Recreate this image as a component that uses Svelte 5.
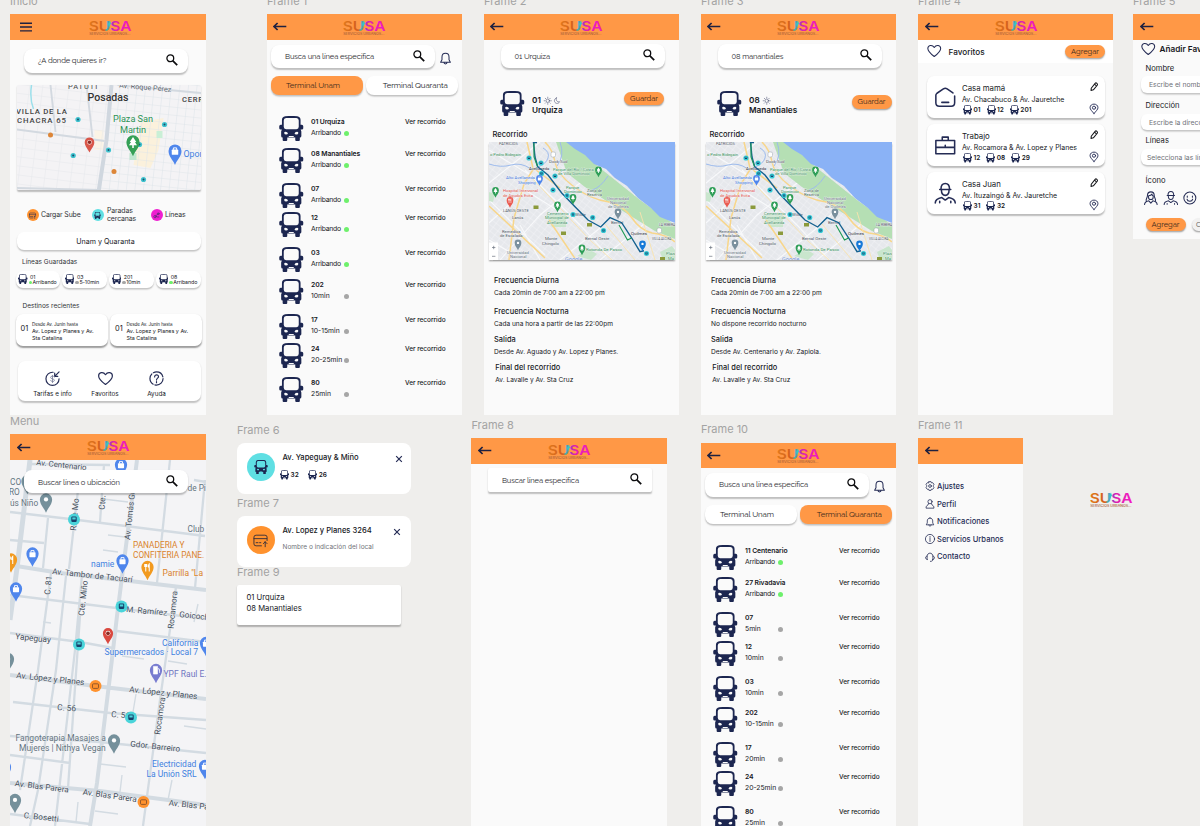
<script>
  const unam = [
    ['01 Urquiza', 'Arribando', true, 32],
    ['08 Manantiales', 'Arribando', true, 35],
    ['07', 'Arribando', true, 29],
    ['12', 'Arribando', true, 35],
    ['03', 'Arribando', true, 32],
    ['202', '10min', false, 35],
    ['17', '10-15min', false, 28.5],
    ['24', '20-25min', false, 34.5],
    ['80', '25min', false, 30]
  ];
  const quaranta = [
    ['11 Centenario', 'Arribando', true, 32],
    ['27 Rivadavia', 'Arribando', true, 35],
    ['07', '5min', false, 29],
    ['12', '10min', false, 35],
    ['03', '10min', false, 31.5],
    ['202', '10-15min', false, 35],
    ['17', '20min', false, 28.5],
    ['24', '20-25min', false, 35],
    ['80', '25min', false, 30]
  ];
  const chips = [
    ['01', 'Arribando', true],
    ['03', '5-10min', false],
    ['201', '10min', false],
    ['08', 'Arribando', true]
  ];
  const favs = [
    { icon: 'home', name: 'Casa mamá', addr: 'Av. Chacabuco & Av. Jauretche', lines: ['01', '12', '201'] },
    { icon: 'case', name: 'Trabajo', addr: 'Av. Rocamora & Av. Lopez y Planes', lines: ['12', '08', '29'] },
    { icon: 'man', name: 'Casa Juan', addr: 'Av. Ituzaingó & Av. Jauretche', lines: ['31', '32'] }
  ];
  const fields = [
    ['Nombre', 'Escribe el nombre'],
    ['Dirección', 'Escribe la dirección'],
    ['Líneas', 'Selecciona las líneas']
  ];
  const menu = [
    ['gear', 'Ajustes', 19],
    ['user', 'Perfil', 17.5],
    ['bell', 'Notificaciones', 17.5],
    ['info', 'Servicios Urbanos', 17.5],
    ['phones', 'Contacto', 17.5]
  ];
  const routes = [
    {
      cls: 'f2', label: 'Frame 2', query: '01 Urquiza', num: '01', name: 'Urquiza', night: true,
      info: [
        ['Frecuencia Diurna', 'Cada 20min de 7:00 am a 22:00 pm'],
        ['Frecuencia Nocturna', 'Cada una hora a partir de las 22:00pm'],
        ['Salida', 'Desde Av. Aguado y Av. Lopez y Planes.'],
        ['Final del recorrido', 'Av. Lavalle y Av. Sta Cruz']
      ]
    },
    {
      cls: 'f3', label: 'Frame 3', query: '08 manantiales', num: '08', name: 'Manantiales', night: false,
      info: [
        ['Frecuencia Diurna', 'Cada 20min de 7:00 am a 22:00 pm'],
        ['Frecuencia Nocturna', 'No dispone recorrido nocturno'],
        ['Salida', 'Desde Av. Centenario y Av. Zapiola.'],
        ['Final del recorrido', 'Av. Lavalle y Av. Sta Cruz']
      ]
    }
  ];

  // text, x, y, size, rotation, colour
  const G = '#434e5b', B = '#3f7fe0', O = '#d9822b', S = '#64747f';
  const streets = [
    ['Av. Centenario', 36, 465, 7.9, 6, G],
    ['CO', 10, 485, 8.3, 0, S],
    ['RO', 9, 495, 8.3, 0, S],
    ['ús Niño', 10, 505.5, 8.3, 0, S],
    ['R. de Mo', 76, 531, 8.3, -85, G],
    ['Cte.', 104.5, 510, 8.3, -86, G],
    ['Av. Tomás Gue', 130, 540, 8.3, -84, G],
    ['de Pi', 187.5, 491, 8.3, 0, S],
    ['Club', 187.5, 532, 8.3, 0, S],
    ['PANADERIA Y', 133, 548, 8.3, 0, O],
    ['CONFITERIA PANE.', 133, 558, 8.3, 0, O],
    ['namie', 91, 566.5, 8.5, 0, B],
    ['Parrilla "La', 162.5, 576, 8.5, 0, O],
    ['Av. Tambor de Tacuarí', 52, 574, 8.2, 6, G],
    ['C. 81', 50, 595, 8.3, -84, G],
    ['Cte. Miño', 84, 616, 8.3, -84, G],
    ['M. Ramírez', 126, 612, 8.2, 5, G],
    ['Goicoche', 179, 617, 8.2, 6, G],
    ['Rocamora', 173.5, 629, 8.3, -84, G],
    ['Yapeguay', 15, 639, 8.3, 6, G],
    ['California', 162, 645.5, 8.5, 0, B],
    ['Supermercados · Local 7', 104.5, 654.5, 8.5, 0, B],
    ['YPF Raul E.', 163.5, 677, 8.5, 0, '#6f74c0'],
    ['Av. López y Planes', 16, 678, 8.3, 6, G],
    ['Av. López y Planes', 129, 692, 8.3, 6, G],
    ['C. 56', 57, 710, 8.3, 4, G],
    ['C. 56', 111, 717, 8.3, 4, G],
    ['Rocamora', 160, 735, 8.3, -82, G],
    ['Fangoterapia Masajes a', 15.5, 741, 8.5, 0, S],
    ['Mujeres | Nithya Vegan', 19, 751, 8.5, 0, S],
    ['Gdor. Barreiro', 130, 746.5, 8.2, 6, G],
    ['Electricidad', 152, 767, 8.5, 0, B],
    ['La Unión SRL', 146.5, 777, 8.5, 0, B],
    ['Av. Blas Parera', 14.5, 786, 8.2, 7, G],
    ['Av. Blas Parera', 82.5, 794.5, 8.2, 8, G],
    ['Av. Blas Pa', 168.5, 805.5, 8.2, 6, G],
    ['C. Bosetti', 23.5, 818, 8.2, 6, G]
  ];
  const E = '#2f8f56', K = '#4b5563';
  const places = [
    ['PATRICIOS', 499, 145, 3.9, K],
    ['o Pedro Bidegain', 490, 156, 4.1, E],
    ['Dock Sud', 549, 162.5, 4.4, K],
    ['Avellaneda', 529, 170, 4.2, '#1f2937'],
    ['Parque del Río / Costa', 553, 170.7, 4.1, E],
    ['de Villa Domínico', 558, 174.9, 4.1, E],
    ['Alto Avellaneda', 506, 179.4, 4.2, '#3b76dc'],
    ['Shopping', 518, 184, 4.2, '#3b76dc'],
    ['Hospital Interzonal', 503, 192.3, 4.2, '#e0524a'],
    ['de Agudos Evita', 503, 196.5, 4.2, '#e0524a'],
    ['Parque', 566, 188.5, 4.2, E],
    ['Dominico', 564, 193, 4.2, E],
    ['Zona de', 587, 191.5, 4.2, '#3f6b54'],
    ['Reserva', 587, 196, 4.2, '#3f6b54'],
    ['Universidad', 607, 199.5, 4.2, S],
    ['Nacional', 610, 203.7, 4.2, S],
    ['de Quilmes', 608, 208, 4.2, S],
    ['LANÚS OESTE', 503, 211.5, 4, K],
    ['Lanús', 512, 219.2, 4.2, K],
    ['Cementerio', 547, 215, 4.2, E],
    ['Municipal de', 545, 219.3, 4.2, E],
    ['Avellaneda', 547, 223.7, 4.2, E],
    ['Wilde', 575, 216, 4.4, K],
    ['Bernal', 611, 223.5, 4.4, K],
    ['Remedios', 502, 232.8, 4.2, K],
    ['de Escalada', 500, 237, 4.2, K],
    ['Monte', 545, 240, 4.3, K],
    ['Chingolo', 542, 244.5, 4.3, K],
    ['Bernal Oeste', 585, 239.5, 4.3, K],
    ['Quilmes', 631, 234.5, 4.4, '#1f2937'],
    ['LA RIBERA', 659, 226, 3.4, K],
    ['VILLA ALCIRA', 652, 240, 3.1, K],
    ['Rotonda De Pasco', 586, 251, 4.4, E],
    ['Universidad', 507, 254, 4.2, S],
    ['Nacional', 510, 258.3, 4.2, S],
    ['Google', 565, 260.5, 5.5, '#6b8fd8'],
    ['Plaza', 666, 255, 4.2, E],
    ['Ma', 668, 259.5, 4.2, E]
  ];
  const stops = [[529, 158], [541, 163], [541.5, 173.5], [555, 176], [553, 190], [567, 195.5], [573, 214.5], [592.7, 217.5], [603.5, 230.5], [646.5, 253.5]];
</script>

{#snippet bus(cls)}
  <svg class="bus {cls}" viewBox="0 0 24 25">
    <path fill-rule="evenodd" d="M6 .2Q12-.3 18 .2 21.300.8 21.300 4v4.800h1.200Q24 9 24 10.200v2q0 1.300-1.500 1.400H21.400l.7 2V20q0 1.500-1.500 1.500V24q0 1-1 1h-2.600q-1 0-1-1v-2.500H8V24q0 1-1 1H4.400q-1 0-1-1v-2.500Q1.900 21.500 1.900 20v-4.400l.7-2H1.500Q0 13.500 0 12.200v-2Q0 9 1.500 8.800H2.700V4Q2.700.8 6 .2ZM6.800 2Q4.500 2.200 4.500 4.500v6.300Q4.500 13.200 6.800 13.200h10.400q2.300 0 2.300-2.400V4.500q0-2.300-2.300-2.500ZM6.300 15.800q-1.600 0-1.300 1.400.2 1.200 1.800 1.200t1.900-1q-.4-1.600-2.400-1.600Zm11.400 0q-2 0-2.400 1.600.2 1 1.900 1t1.800-1.200q.3-1.400-1.300-1.400ZM9.500 19.900v1h5v-1Z" />
  </svg>
{/snippet}

{#snippet logo()}
  <svg class="logo" viewBox="0 0 43 17">
    <defs>
      <linearGradient id="lg" gradientUnits="userSpaceOnUse" x1="0" y1="0" x2="42" y2="0">
        <stop offset="0" stop-color="#e07a1c" /><stop offset=".3" stop-color="#d4601e" /><stop offset=".37" stop-color="#d8642a" />
        <stop offset=".42" stop-color="#46b5b0" /><stop offset=".48" stop-color="#5a8fd0" />
        <stop offset=".54" stop-color="#a535c0" /><stop offset=".64" stop-color="#e31fae" /><stop offset="1" stop-color="#f01bc4" />
      </linearGradient>
    </defs>
    <text class="word" x="-.2" y="11.300" textLength="42.600" lengthAdjust="spacingAndGlyphs" fill="url(#lg)">SUSA</text>
    <path d="M19 4 21 .6 21.800 3.200 20.200 7.500Z" fill="#35c6c6" />
    <text class="tag" x=".3" y="15.200" textLength="41" lengthAdjust="spacingAndGlyphs" fill="#a9603a">SERVICIOS URBANOS...</text>
  </svg>
{/snippet}

{#snippet arrow()}
  <svg class="arrow" viewBox="0 0 14 9"><path d="M13.300 4.500H1M4.600 1 1 4.500 4.600 8" /></svg>
{/snippet}

{#snippet header(home = false)}
  <header>
    {#if home}
      <svg class="burger" viewBox="0 0 12 10"><path d="M0 1.200h12M0 5h12M0 8.900h12" /></svg>
    {:else}
      {@render arrow()}
    {/if}
    {@render logo()}
  </header>
{/snippet}

{#snippet search(text, cls = '')}
  <div class="search {cls}">
    <span>{text}</span>
    <svg viewBox="0 0 12 12"><circle cx="4.300" cy="4.300" r="3.400" /><path d="m6.900 6.900 4.300 4.300" /></svg>
  </div>
{/snippet}

{#snippet icon(name, cls = '')}
  <svg class="ico {cls}" viewBox="0 0 24 24">
    {#if name === 'heart'}
      <path d="M12 21.500C6 17 1 12.500 1 7.800 1 2 8.500.5 12 6c3.500-5.500 11-4 11 1.800 0 4.700-5 9.200-11 13.700Z" />
    {:else if name === 'bell'}
      <path d="M12 2.500c-4.500 0-6.500 3.300-6.500 7v4.800L3 18.800h18l-2.500-4.500V9.500c0-3.700-2-7-6.500-7ZM9 19c.3 4 5.700 4 6 0" />
    {:else if name === 'home'}
      <path d="M23 10.500v8q0 4-4 4H5q-4 0-4-4V9.800q0-1.500 1.300-2.500l7.500-5Q12 .800 14.200 2.300l6.800 4.700M8 18h8" />
    {:else if name === 'case'}
      <path d="M1 6.500h22V22H1ZM1 14.500h22M8.500 6V2.500h7V6M12 12v1.500" />
    {:else if name === 'man' || name === 'kid'}
      <path d="M5.500 7.500h13M7 7C7 2.500 9 .5 12 .5S17 2.500 17 7M7.500 8c0 4 2 6.500 4.500 6.500s4.500-2.500 4.500-6.500M.3 23.500c0-4 3-5.500 7.700-6.500l4 3 4-3c4.700 1 7.700 2.500 7.700 6.500M5.500 23v-1.500M18.500 23v-1.500" />
    {:else if name === 'woman'}
      <path d="M4 17.500C2.500 14 6 12 6 8c0-9 12-9 12 0 0 4 3.500 6 2 9.500M8 8c3 0 5-1 6-3 0 2 1 3 2 3v3c0 5-8 5-8 0ZM1 23.500c0-4 3-5.500 7.500-6.500l3.500 4 3.500-4c4.500 1 7.500 2.500 7.500 6.500" />
    {:else if name === 'face'}
      <circle cx="12" cy="12" r="10.500" /><path d="M7 14c1 5 9 5 10 0M7.500 8.500v2M16.500 8.500v2" />
    {:else if name === 'gear'}
      <circle cx="12" cy="12" r="3.300" /><path d="M9.500 1.500h5l1 3 3-.5 3 4-1.500 3v2l1.500 3-3 4-3-.5-1 3h-5l-1-3-3 .5-3-4L4 13v-2L2.500 8l3-4 3 .5Z" />
    {:else if name === 'user'}
      <circle cx="12" cy="6.500" r="5" /><path d="M8.500 11 7 14.500C4 15.500 2.500 17.500 2.500 22h19c0-4.500-1.500-6.500-4.500-7.500L15.500 11" />
    {:else if name === 'info'}
      <circle cx="12" cy="12" r="11" /><path d="M12 10.500V18M12 6v2" />
    {:else if name === 'phones'}
      <path d="M5 18c-5-1-5-8 0-8v8ZM19 18c5-1 5-8 0-8v8ZM5 10C5 0 19 0 19 10M19 18c0 3-2 4.500-6 4.500" />
    {:else if name === 'fare'}
      <path d="M13 2C7 1.500 1.500 6 1.500 12.500S6.500 23 12 23s10.500-4 10.500-10.500M22.500 1.500 15.500 8.500M15.500 3.500v5h5" /><path class="thin" d="M15 9.500c-1-2-6-2-6 .8 0 3 6 1.500 6 4.500 0 2.800-5 2.800-6 .5M12 7v11.500" />
    {:else if name === 'help'}
      <circle cx="12" cy="12" r="10.500" stroke-dasharray="19 3" /><path d="M9 9.500c0-4.500 6.500-4 6.200-.3C15 11.500 12 11.500 12 14.500M12 17v1.800" />
    {:else if name === 'pencil'}
      <path d="m3.500 17 11-14q2-2.500 5 0t1 5.500L9.500 21.500 3 23.500ZM13 5.500l5 4.500" />
    {:else if name === 'pin'}
      <path d="M12 23.500C7 17.500 2.500 13.500 2.500 9.500 2.500-2 21.500-2 21.500 9.500 21.500 13.500 17 17.500 12 23.500Z" /><circle cx="12" cy="9.500" r="3.800" />
    {:else if name === 'card'}
      <path d="M13.500 20.500H5q-3.500 0-3.500-3V6.500q0-3 3.500-3h14q3.500 0 3.500 3V12M1.500 9H22M5 15.500h3M10.500 15.500h2M19.500 22v-8M16.500 17l3-3 3 3" />
    {:else if name === 'sun'}
      <circle cx="12" cy="12" r="5.500" /><path d="M12 .5v2.500M12 21v2.500M.5 12H3M21 12h2.500M4 4l1.500 1.500M18.500 18.500 20 20M20 4l-1.500 1.500M5.500 18.500 4 20" />
    {:else if name === 'moon'}
      <path d="M11 3C2 5 2 19 12 20.500c4 .5 8-2 9-5.500-8 2-13-5-10-12Z" />
    {:else if name === 'close'}
      <path d="m3.500 3.500 17 17M20.500 3.500l-17 17" />
    {:else if name === 'route'}
      <circle cx="7" cy="16" r="4" /><circle cx="18" cy="6" r="3" /><path d="M10 13 15 8M15 17h5" />
    {/if}
  </svg>
{/snippet}

{#snippet pin(x, y, s, c, kind = 'dot')}
  <g transform="translate({x} {y}) scale({s})">
    <path d="M0 12C-2 7-6 4-6-1a6 6 0 0 1 12 0C6 4 2 7 0 12Z" fill={c} />
    {#if kind === 'bag'}
      <rect x="-3" y="-2.200" width="6" height="4.800" rx=".6" fill="#fff" /><path d="M-1.500-2v-1.800h3V-2" fill="none" stroke="#fff" stroke-width=".9" />
    {:else if kind === 'fuel'}
      <path d="M-2.500-4.500h4v7.500h-4ZM2.200-3 3.500-1.500v3.500" fill="#fff" stroke="#fff" stroke-width=".6" />
    {:else if kind === 'tree'}
      <path d="M0-5.500 3-1H1.800L3.600 2H.7v2.500H-.7V2h-2.900L-1.800-1H-3Z" fill="#fff" />
    {:else if kind === 'food'}
      <path d="M-1.700-4v7.500M1.700 3.500V-4q-1.500 1.500-.8 3.500M-2.700-4v2.500h2V-4" fill="none" stroke="#fff" stroke-width="1" />
    {:else if kind === 'dark'}
      <circle r="2.900" cy="-.8" fill="#fbe9e7" /><circle r="2.200" cy="-.8" fill="#8b2b22" />
    {:else}
      <circle r="2.100" cy="-1" fill="#fff" />
    {/if}
  </g>
{/snippet}

{#snippet stop(x, y, r, c)}
  <circle cx={x} cy={y} {r} fill={c} />
  {#if c === '#ff922e'}
    <rect x={x - 3} y={y - 2.2} width="6" height="4.600" rx="1" fill="none" stroke="#7a4a2a" stroke-width=".8" />
  {:else}
    <rect x={x - r * 0.45} y={y - r * 0.5} width={r * 0.9} height={r * 0.9} rx={r * 0.2} fill="#17406b" />
    <rect x={x - r * 0.28} y={y - r * 0.35} width={r * 0.56} height={r * 0.35} fill={c} />
  {/if}
{/snippet}

{#snippet routeMap()}
  <svg class="routemap" viewBox="489 142 186 118">
    <defs>
      <pattern id="blk" width="6" height="5" patternUnits="userSpaceOnUse" patternTransform="rotate(38)">
        <path d="M0 0H6M0 0V5" stroke="#f5f6f8" stroke-width=".7" />
      </pattern>
    </defs>
    <rect x="489" y="142" width="186" height="118" fill="#e6e8ec" />
    <rect x="489" y="142" width="186" height="118" fill="url(#blk)" />
    <path d="M489 183 540 142M489 223 525 190 565 215M500 260 540 215 590 175M560 260 600 228 640 190M489 200 545 255M525 170 580 225 612 260M489 150 530 175M600 260 655 215M540 260 520 225M489 240 515 255" stroke="#f8f9fb" stroke-width="1.100" fill="none" />
    <path d="M556 142 571 142 600 168 640 200 675 225V239L655 231 634 218 605 200 585 187 567 173Z" fill="#b5dfb4" />
    <path d="M566 142 575 149 585 155 594 164 606 169 615 178 627 186 638 198 651 208 660 217 675 223V142Z" fill="#8ab2f6" />
    <path d="M489 164q12 4 22 1t20 4M538 167q8-3 10-9t-5-10M560 142q5 14-3 24M592 190q8-2 16-14" stroke="#9dbbed" stroke-width="1" fill="none" />
    <path d="M546 215h20v12h-14ZM577 256l12-7 8 5-6 6ZM660 252l12-6 3 4v10h-12ZM489 192l6 2-2 8-4-1Z" fill="#c9e6cd" />
    <path d="M545 142q8 8 10 20t18 24q16 13 36 16 15 4 23 16t20 15q16 2 23 9M527 142 533 168M534 168 524 184 514 218 509 260M489 206 545 258M549 220 576 260M536 170 560 188" stroke="#f8d68a" stroke-width="1.500" fill="none" />
    <path d="M532 178 590 240 612 260M605 224 635 260M640 212 655 260" stroke="#f9e3ae" stroke-width=".9" fill="none" />
    <g fill="#8b9a3c"><rect x="533.500" y="205.500" width="5" height="3.500" /><rect x="587" y="223" width="5" height="3.500" /><rect x="561" y="231.500" width="5" height="3.500" /><rect x="660" y="257" width="5" height="3" /></g>
    <g fill="#fff" stroke="#9aa3ad" stroke-width=".5"><rect x="551" y="152" width="4.500" height="5" rx="1.500" /><rect x="657" y="228" width="4.500" height="5" rx="1.500" /></g>
    {#each places as [t, x, y, s, c]}
      <text class="maptext" {x} {y} font-size={s} fill={c}>{t}</text>
    {/each}
    <path d="M537 142.500h-3.500l1.500 14.500 2.700 9.700L548 175l13.700 18 13.300 13.700L588 220l12.700 7 9.300-9.300 11.700 5L631.700 238l8.300 13.700 4-1" stroke="#15618f" stroke-width="1.400" fill="none" />
    <path d="M534 143v14l3.500 9.500M619 225l8.500 15 4-2" stroke="#1d9a55" stroke-width="1.100" fill="none" />
    {#each stops as [x, y]}{@render stop(x, y, 2.6, '#35cbd6')}{/each}
    {@render pin(598.5, 170.5, 0.56, '#2e9e57', 'tree')}
    {@render pin(495.5, 191, 0.56, '#2e9e57', 'tree')}
    {@render pin(573, 198, 0.56, '#2e9e57', 'tree')}
    {@render pin(557.5, 205.5, 0.56, '#2e9e57', 'tree')}
    {@render pin(582, 248.5, 0.56, '#2e9e57', 'tree')}
    {@render pin(539.5, 179, 0.56, '#4f86ec', 'bag')}
    {@render pin(510, 201, 0.56, '#ea5a50', 'food')}
    {@render pin(618, 212.5, 0.56, '#7a909e')}
    {@render pin(518, 243.5, 0.56, '#7a909e')}
    {@render pin(642.5, 244.5, 0.56, '#1679d8')}
    <rect x="489" y="242.500" width="9" height="17.500" fill="#fff" />
    <path d="M492 247.500h3.400M493.700 245.800v3.400M492 256.300h3.400" stroke="#6b7280" stroke-width=".7" />
  </svg>
{/snippet}

{#snippet lineList(label, cls, active, rows)}
  <section class="frame {cls}">
    <p class="label">{label}</p>
    <div class="screen">
      {@render header()}
      <div class="searchrow">{@render search('Busca una línea específica')}{@render icon('bell', 'belltop')}</div>
      <div class="tabs">
        <div class="tab" class:on={active === 0}>Terminal Unam</div>
        <div class="tab second" class:on={active === 1}>Terminal Quaranta</div>
      </div>
      <div class="list">
        {#each rows as [name, status, live, h]}
          <div class="row" style="height: {h}px">
            {@render bus('big')}
            <div class="who"><b>{name}</b><div class="status"><span class:live>{status}</span><i class:live></i></div></div>
            <span class="see">Ver recorrido</span>
          </div>
        {/each}
      </div>
    </div>
  </section>
{/snippet}

<main>
  <section class="frame inicio">
    <p class="label">Inicio</p>
    <div class="screen">
      {@render header(true)}
      {@render search('¿A donde quieres ir?', 'inset')}
      <svg class="citymap" viewBox="16.500 85 184.500 105">
        <defs>
          <pattern id="gr" width="8.500" height="8" patternUnits="userSpaceOnUse" patternTransform="rotate(6)"><path d="M0 0H8.500M0 0V8" stroke="#dfe5ea" stroke-width="1.100" /></pattern>
          <pattern id="gl" width="13" height="9" patternUnits="userSpaceOnUse" patternTransform="rotate(7)"><path d="M0 0H13M0 0V9" stroke="#e5e8ec" stroke-width="1" /></pattern>
        </defs>
        <rect x="16" y="85" width="186" height="105" fill="#f4f3f5" />
        <path d="M140 122 163 118 158 150 150 168 133 165Z" fill="#fbf1dc" /><path d="M94 130h9v20h-9Z" fill="#fbf4e6" />
        <path d="M16 85h94l-10 105H16Z" fill="url(#gl)" /><path d="M110 85h92v105H100Z" fill="url(#gr)" />
        <path d="M16 129.500 104 141M117 85 201 93M16 188 100 190M50 85 55 132M86 85 92 137" stroke="#d3d9e0" stroke-width="1.900" fill="none" />
        <path d="M111 85 106 140 98 192" stroke="#d0d7df" stroke-width="4" fill="none" />
        <path d="M31 85q-2 14 2 24" stroke="#9bdfea" stroke-width="1.500" fill="none" />
        <rect x="156" y="131" width="6" height="7" fill="#c9efd6" /><rect x="129" y="153" width="7" height="7" fill="#bfe8d0" />
        <text class="maptext" x="67.500" y="89" font-size="7.400" fill="#444" letter-spacing="1">PATUTI</text>
        <text class="maptext" transform="translate(118.500 87.500) rotate(5)" font-size="7.300" fill="#59626c">Av. Roque Pérez</text>
        <text class="maptext md" x="87" y="100.500" font-size="10.600" fill="#333" textLength="41">Posadas</text>
        <text class="maptext md" x="181.500" y="101.500" font-size="7.600" fill="#444" letter-spacing=".7">CERRO</text>
        <text class="maptext md" x="15.500" y="113.800" font-size="7.800" fill="#444" textLength="51">VILLA DE LA</text>
        <text class="maptext md" x="16.500" y="122.800" font-size="7.800" fill="#444" textLength="49">CHACRA 65</text>
        <text class="maptext" x="112.500" y="122" font-size="9.200" fill="#2c9254" textLength="40">Plaza San</text>
        <text class="maptext" x="119.500" y="132.500" font-size="9.200" fill="#2c9254" textLength="26">Martin</text>
        <text class="maptext" x="183" y="157" font-size="8.800" fill={B}>Oportunidad</text>
        {#each [[77.5, 119.5], [164, 124.5], [108, 150], [72.7, 155.5], [139, 144.5], [143, 179.5]] as [x, y]}
          <circle cx={x} cy={y} r="2.600" fill="#3fc3cf" /><circle cx={x} cy={y} r="1" fill="#1c4c6b" />
        {/each}
        {#each [[50, 135], [113.5, 171.5]] as [x, y]}<circle cx={x} cy={y} r="2.500" fill="#dd8638" />{/each}
        {@render pin(132.5, 143, 1.1, '#35a056', 'tree')}
        {@render pin(89, 143, 0.8, '#d9574a', 'dark')}
        {@render pin(174.5, 152, 1.08, '#4f86ec', 'bag')}
      </svg>
      <div class="legend">
        <span class="badge or">{@render icon('card')}</span><span class="l1">Cargar Sube</span>
        <span class="badge te">{@render bus('mini')}</span><span class="l2">Paradas<br />cercanas</span>
        <span class="badge ma">{@render icon('route')}</span><span>Líneas</span>
      </div>
      <div class="wide">Unam y Quaranta</div>
      <p class="cap">Líneas Guardadas</p>
      <div class="chips">
        {#each chips as [n, s, live]}
          <div class="chip">{@render bus('tiny')}<div><span>{n}</span><span class="st"><i class:live></i>{s}</span></div></div>
        {/each}
      </div>
      <p class="cap dest">Destinos recientes</p>
      <div class="recents">
        {#each [0, 1] as _}
          <div class="recent"><em>01</em><div><small>Desde Av. Junín hasta</small><span>Av. Lopez y Planes y Av.<br />Sta Catalina</span></div></div>
        {/each}
      </div>
      <nav>
        <div class="n1">{@render icon('fare')}<span>Tarifas e info</span></div>
        <div class="n2">{@render icon('heart')}<span>Favoritos</span></div>
        <div class="n3">{@render icon('help')}<span>Ayuda</span></div>
      </nav>
    </div>
  </section>

  {@render lineList('Frame 1', 'f1', 0, unam)}

  {#each routes as r}
    <section class="frame {r.cls}">
      <p class="label">{r.label}</p>
      <div class="screen">
        {@render header()}
        {@render search(r.query, 'mid')}
        <div class="line">
          {@render bus('big')}
          <div class="title"><div>{r.num}<span class="sky">{@render icon('sun')}{#if r.night}{@render icon('moon')}{/if}</span></div><div>{r.name}</div></div>
          <div class="btn">Guardar</div>
        </div>
        <p class="rec">Recorrido</p>
        {@render routeMap()}
        <dl>
          {#each r.info as [t, d]}<div><dt>{t}</dt><dd>{d}</dd></div>{/each}
        </dl>
      </div>
    </section>
  {/each}

  <section class="frame f4">
    <p class="label">Frame 4</p>
    <div class="screen">
      {@render header()}
      <div class="favhead">{@render icon('heart')}<b>Favoritos</b><div class="btn">Agregar</div></div>
      <div class="cards">
        {#each favs as f}
          <div class="card">
            {@render icon(f.icon, 'lead')}
            <div class="info">
              <strong>{f.name}</strong><span>{f.addr}</span>
              <div class="lines">{#each f.lines as l}<span>{@render bus('sm')}{l}</span>{/each}</div>
            </div>
            <div class="acts">{@render icon('pencil', 'pencil')}{@render icon('pin', 'loc')}</div>
          </div>
        {/each}
      </div>
    </div>
  </section>

  <section class="frame f5">
    <p class="label">Frame 5</p>
    <div class="screen">
      {@render header()}
      <div class="addhead">{@render icon('heart')}<b>Añadir Favorito</b></div>
      {#each fields as [l, p], i}
        <p class="flabel" class:tight={i === 2}>{l}</p>
        <div class="input">{p}</div>
      {/each}
      <p class="flabel il">Ícono</p>
      <div class="faces">{@render icon('woman')}{@render icon('kid')}{@render icon('face')}</div>
      <div class="btns"><div class="btn">Agregar</div><div class="btn ghost">Cancelar</div></div>
    </div>
  </section>

  <section class="frame menu">
    <p class="label">Menu</p>
    <div class="screen">
      {@render header()}
      <svg class="streets" viewBox="10 460 195.500 366">
        <rect x="10" y="460" width="196" height="366" fill="#f4f4f6" />
        <g fill="none" stroke="#d3dbe2">
          <path stroke-width="5" d="M30 460 17 568 10 620" />
          <path stroke-width="4" d="M10 565 60 573 130 581 206 590M10 675 95 686 206 699M10 783 100 791 206 805M137 460 122 577 117 616 110 676 97 783 90 826" />
          <path stroke-width="2.300" d="M10 512 70 519 205 536M29 464 110 465M170 460 157 583M176 587 160 700 143 826M194 480 206 482M205 480 195 588M104 465 100 522M78 490 69 569M10 595 206 619M10 633 80 642 113 648M117 631 206 642M13 702 110 713 206 720M10 736 100 742 206 753M48 518 43 568M51 573 38 670 20 790M82 575 75 650 55 826M66 576 56 670 38 790 30 826M10 755 70 763M10 814 90 824M10 540 44 543M80 616 68 788" />
          <path stroke-width="1.400" d="M103 499 128 502M108 535 125 537M103 550 118 552M122 656 144 659M168 661 187 664M184 726 206 729M100 764 126 767M78 802 76 822M122 775 120 792M172 780 168 800M136 694 133 712M95 811 118 814M198 604 194 622M43 622 51 623" />
        </g>
        {#each streets as [t, x, y, s, r, c]}
          <text class="maptext" transform="translate({x} {y}) rotate({r})" font-size={s} fill={c}>{t}</text>
        {/each}
        {@render pin(121, 465.5, 1.02, '#4f86ec', 'bag')}
        {@render pin(32.5, 554.5, 1.02, '#4f86ec', 'bag')}
        {@render pin(16, 589.5, 1.02, '#4f86ec', 'bag')}
        {@render pin(122.5, 561.5, 1.02, '#4f86ec', 'bag')}
        {@render pin(147.5, 568, 1.02, '#f29a1f', 'food')}
        {@render pin(11, 560.5, 1.02, '#f29a1f', 'food')}
        {@render pin(46, 500.5, 1.02, '#75909b')}
        {@render pin(27.5, 482, 1.02, '#75909b')}
        {@render pin(108, 634, 0.85, '#d9483f', 'dark')}
        {@render pin(156, 671, 1.02, '#777bd0', 'fuel')}
        {@render pin(206, 644, 1.02, '#4f86ec', 'bag')}
        {@render pin(205, 767, 1.02, '#4f86ec', 'bag')}
        {@render pin(114, 741.5, 1.02, '#75909b')}
        {@render pin(15, 801, 1.02, '#75909b')}
        {@render pin(8, 660, 1.02, '#75909b')}
        {@render pin(5, 768, 1.02, '#4f86ec')}
        {@render stop(74, 519.5, 6, '#4ad4da')}
        {@render stop(121.5, 606.5, 6, '#4ad4da')}
        {@render stop(79, 644.5, 6, '#4ad4da')}
        {@render stop(131, 717.5, 6, '#4ad4da')}
        {@render stop(95.5, 686, 6, '#ff922e')}
        {@render stop(143.5, 802, 6, '#ff922e')}
      </svg>
      {@render search('Buscar línea o ubicación', 'over')}
    </div>
  </section>

  <section class="frame f6">
    <p class="label">Frame 6</p>
    <div class="pop">
      <span class="disc te">{@render bus('disk')}</span>
      <div class="info"><strong>Av. Yapeguay &amp; Miño</strong><div class="lines"><span>{@render bus('sm')}32</span><span>{@render bus('sm')}26</span></div></div>
      {@render icon('close', 'x')}
    </div>
  </section>
  <section class="frame f7">
    <p class="label">Frame 7</p>
    <div class="pop">
      <span class="disc or">{@render icon('card')}</span>
      <div class="info"><strong>Av. Lopez y Planes 3264</strong><small>Nombre o indicación del local</small></div>
      {@render icon('close', 'x')}
    </div>
  </section>
  <section class="frame f9">
    <p class="label">Frame 9</p>
    <div class="drop">01 Urquiza<br />08 Manantiales</div>
  </section>

  <section class="frame f8">
    <p class="label">Frame 8</p>
    <div class="screen">{@render header()}{@render search('Buscar línea específica', 'square')}</div>
  </section>

  {@render lineList('Frame 10', 'f10', 1, quaranta)}

  <section class="frame f11">
    <p class="label">Frame 11</p>
    <div class="screen">
      <header>{@render arrow()}</header>
      <ul>
        {#each menu as [i, t, h]}<li style="height: {h}px">{@render icon(i)}{t}</li>{/each}
      </ul>
    </div>
  </section>

  <div class="brand">{@render logo()}</div>
</main>

<style>
  :global(body) { background: #efeeec; overflow: hidden; }
  main { position: relative; width: 1200px; height: 826px; overflow: hidden; background: #efeeec; font-family: Inter, sans-serif; color: #16181d; }
  p, dl, dd, ul { margin: 0; padding: 0; }
  svg { display: block; flex: none; }

  /* artboards placed on the free canvas */
  .frame { position: absolute; width: 195px; --back: 6px; --logo: 56px; }
  .label { position: absolute; left: 0; top: -20.500px; font-size: 11px; line-height: 14px; color: #a3a3a3; white-space: nowrap; }
  .screen { height: 401px; background: #fafafa; overflow: hidden; display: flex; flex-direction: column; position: relative; }
  .inicio { left: 10px; top: 14px; width: 195.500px; }
  .f1 { left: 267px; top: 14px; }
  .f2 { left: 484px; top: 14px; }
  .f3 { left: 701px; top: 14px; }
  .f4 { left: 918px; top: 14px; --back: 7px; }
  .f5 { left: 1133px; top: 14px; --back: 7px; }
  .menu { left: 10px; top: 434.400px; width: 195.500px; --back: 7px; }
  .f8 { left: 471.400px; top: 438px; width: 195.400px; --back: 7px; }
  .f10 { left: 701px; top: 442.5px; }
  .f11 { left: 918px; top: 438px; width: 104.5px; --back: 7px; }
  .f6 { left: 237px; top: 443px; width: 174px; }
  .f7 { left: 237px; top: 516px; width: 174px; }
  .f9 { left: 237px; top: 585px; width: 164px; }
  .brand { position: absolute; left: 1090px; top: 492px; }
  .f5 .screen { height: 224.5px; }

  header { flex: none; height: 25.5px; background: #ff9846; display: flex; align-items: center; padding-left: var(--back); }
  .arrow { width: 14px; height: 9px; }
  .arrow path, .burger path { fill: none; stroke: #1f2140; stroke-width: 1.7; }
  .burger { width: 12px; height: 10px; margin: 1px 1px 0 4px; }
  .burger path { stroke-width: 1.4; }
  .logo { width: 43px; height: 17px; }
  header .logo { margin: 3px 0 0 var(--logo); }
  .word { font: 600 13.200px Inter, sans-serif; }
  .tag { font: 500 3.4px Inter, sans-serif; }
  .bus path { fill: #1c2650; }
  .bus.big { width: 24.5px; height: 25px; }
  .bus.sm { width: 9px; height: 9.5px; }
  .bus.disk { width: 14px; height: 14px; }
  .bus.tiny { width: 9.5px; height: 10px; }
  .bus.mini { width: 7px; height: 7px; }
  .ico { fill: none; stroke: #252c55; stroke-width: 1.9; stroke-linejoin: round; stroke-linecap: round; overflow: visible; }

  .search { box-sizing: border-box; flex: none; width: 164px; height: 23.5px; border-radius: 8px; background: #fff; box-shadow: 0 1.5px 1.5px #0000003d; display: flex; align-items: center; justify-content: space-between; padding: 0 10px 0 14px; font: 7.6px Raleway, "Open Sans", sans-serif; letter-spacing: -.14px; color: #26272b; }
  .search svg { width: 12px; height: 12px; margin-top: -1.500px; }
  .search svg circle, .search svg path { fill: none; stroke: #0c0c0e; stroke-width: 1.300; }
  .search svg path { stroke-width: 1.700; }
  .inset { margin: 9.5px 0 0 14px; }
  .mid { margin: 4.500px 0 0 16.500px; }
  .square { margin: 4.500px 0 0 16.500px; border-radius: 2px; }
  .square span, .over span, .mid span { padding-top: 1px; }
  .over { position: absolute; left: 14px; top: 35.500px; }

  .citymap { width: 184.5px; height: 105px; margin: 12.5px 0 0 6.5px; border-radius: 2px; box-shadow: 0 1.5px 1.5px #00000040; }
  .maptext { font-family: Roboto, sans-serif; font-weight: 400; paint-order: stroke; stroke: #f6f6f8; stroke-width: .5; }
  .maptext.md { font-weight: 500; }
  .legend { display: flex; align-items: center; height: 20px; margin-top: 15px; padding-left: 16.500px; font-size: 6.9px; line-height: 8px; letter-spacing: -.1px; color: #303236; }
  .badge { flex: none; width: 12.5px; height: 12.5px; border-radius: 50%; display: grid; place-items: center; margin-right: 2px; }
  .badge .ico { width: 7px; height: 7px; }
  .or { background: #ff922e; }
  .te { background: #5fdfe3; }
  .ma { background: #ee1fd0; }
  .l1 { width: 50.500px; white-space: nowrap; }
  .l2 { width: 43.500px; padding-left: 1px; }
  .wide { margin: 6.500px 0 0 6.500px; width: 184px; height: 18.5px; border-radius: 7px; background: #fff; box-shadow: 0 1.5px 1.5px #0000003a; text-align: center; font-size: 7.1px; line-height: 19px; flex: none; text-indent: -6px; }
  .cap { margin: 7px 0 0 12px; font-size: 6.5px; line-height: 10px; color: #303236; }
  .cap.dest { margin-top: 13px; padding-left: .5px; }
  .chips { display: flex; gap: 2.200px; margin: 3.500px 0 0 5.500px; }
  .chip { width: 44.700px; height: 17.5px; border-radius: 7px; background: #fff; box-shadow: 0 1.5px 1.5px #0000003a; display: flex; align-items: center; box-sizing: border-box; padding-left: 2.500px; }
  .chip div { display: flex; flex-direction: column; font-size: 5.3px; line-height: 5px; padding-top: 1px; }
  .chip div > span:first-child { padding-left: 2.500px; }
  .st { display: flex; align-items: center; letter-spacing: -.08px; white-space: nowrap; }
  i { display: inline-block; width: 5px; height: 5px; border-radius: 50%; background: #a6a6a6; flex: none; }
  i.live { background: #6ef06c; }
  .st i { width: 3.5px; height: 3.5px; margin: 0 .5px 0 1px; }
  .recents { display: flex; gap: 2.500px; margin: 3px 0 0 5.500px; }
  .recent { box-sizing: border-box; width: 92px; height: 32px; border-radius: 7px; background: #fff; box-shadow: 0 1.8px 1.5px #00000060; display: flex; align-items: center; gap: 3px; padding-left: 5px; }
  .recent em { font-style: normal; font-size: 7.4px; width: 8.500px; padding-bottom: 3px; }
  .recent div { font-size: 5.400px; line-height: 6.2px; white-space: nowrap; padding-top: 3px; }
  .recent small { display: block; font-size: 4.5px; letter-spacing: -.05px; }
  nav { margin: 15px 0 0 8px; width: 182.500px; height: 39.500px; border-radius: 7px; background: #fff; box-shadow: 0 1.5px 1.5px #0000003a; display: flex; flex: none; font-size: 6.3px; box-sizing: border-box; padding: 10px 0 0 15px; }
  nav div { display: flex; flex-direction: column; align-items: center; gap: 3.800px; }
  nav .ico { width: 15px; height: 15px; }
  nav .thin { stroke-width: 1.3; stroke: #777d99; }
  .n1 { width: 39px; } .n2 { width: 66px; } .n3 { width: 37px; }
  nav span { white-space: nowrap; }

  .searchrow { display: flex; align-items: center; margin: 5.200px 0 0 4px; gap: 4px; flex: none; }
  .belltop { width: 13px; height: 13px; margin-top: 4px; }
  .tabs { display: flex; gap: 2.500px; margin: 8.300px 0 0 4px; flex: none; }
  .tab { box-sizing: border-box; width: 92.300px; height: 19px; border-radius: 8px; background: #fff; box-shadow: 0 1.5px 1.5px #0000003d; padding-left: 15px; font: 7.9px/19px Raleway, "Open Sans", sans-serif; letter-spacing: -.1px; }
  .second { padding-left: 17px; }
  .tab.on { background: #ff9846; color: #3b2a1c; }
  .list { margin: 21px 0 0 12px; }
  .row { display: flex; align-items: flex-start; font-size: 6.8px; line-height: 11px; white-space: nowrap; }
  .who { width: 94px; margin-left: 7.500px; }
  .who b { font-weight: 600; display: block; letter-spacing: -.1px; }
  .status { display: flex; align-items: center; }
  .status span { width: 33px; }
  .status span.live { letter-spacing: -.23px; }
  .status i { margin-top: 2px; }
  .see { padding-top: .800px; font-weight: 500; font-size: 6.45px; }

  .line { display: flex; align-items: center; margin: 22px 0 0 16px; height: 28px; flex: none; }
  .title { margin: 0 0 0 7.500px; width: 84.500px; font-size: 8.200px; line-height: 9.300px; font-weight: 600; padding-top: 4px; }
  .title div { display: flex; align-items: center; }
  .sky { display: flex; gap: 1.500px; margin-left: 3.500px; }
  .title .ico { width: 7.500px; height: 7.500px; stroke-width: 1.5; }
  .btn { flex: none; width: 40px; height: 13.5px; border-radius: 7px; background: #ff9846; box-shadow: 0 1.300px 1.500px #00000055; font: 7.5px/13px Raleway, "Open Sans", sans-serif; text-align: center; color: #37271a; }
  .f2 .line .btn { margin: -10px 0 0 7.500px; }
  .f3 .line .btn { margin: -3px 0 0 18px; }
  .rec { margin: 12.300px 0 0 8.500px; font-size: 7.5px; line-height: 10px; font-weight: 500; flex: none; }
  .routemap { width: 186px; height: 118px; margin: 2.700px 0 0 5.200px; box-shadow: 0 1.5px 1.5px #00000055; }
  dl { margin: 14.800px 0 0 10px; white-space: nowrap; }
  dl div { height: 30.300px; }
  dl div:nth-child(2) { height: 28.300px; }
  dl div:nth-child(3) { height: 28px; }
  dl div:nth-child(4) { padding-left: 1.300px; }
  dt { font-size: 7.4px; line-height: 11px; font-weight: 500; letter-spacing: .05px; }
  dd { font-size: 6.55px; line-height: 10px; margin-top: 2px; }

  .favhead { display: flex; align-items: center; background: #fff; height: 23.500px; padding-left: 9px; font-size: 8.200px; flex: none; }
  .favhead .ico, .addhead .ico { width: 14.5px; height: 14px; stroke-width: 1.8; }
  .favhead b { font-weight: 500; margin-left: 7px; width: 116.500px; padding-top: 1px; }
  .cards { display: flex; flex-direction: column; gap: 5.500px; margin: 12.500px 0 0 9px; }
  .card { box-sizing: border-box; width: 178px; height: 42.500px; background: #fff; border-radius: 7px; box-shadow: 0 1.500px 1.5px #00000040; display: flex; align-items: center; padding: 0 6px 0 7.500px; }
  .lead { width: 20.5px; height: 20.5px; stroke-width: 1.8; margin-top: 1px; }
  .card .info { width: 128px; margin-left: 7px; font-size: 6.950px; line-height: 11px; padding-top: 3.500px; }
  .info { display: flex; flex-direction: column; white-space: nowrap; }
  .card strong { font-weight: 400; font-size: 7.8px; line-height: 12px; }
  .lines { display: flex; gap: 6px; font-weight: 600; font-size: 6.5px; line-height: 11px; }
  .lines span { display: flex; align-items: center; gap: 1.500px; }
  .card .lines { padding-left: 1px; }
  .acts { display: flex; flex-direction: column; gap: 12px; align-items: center; width: 10px; padding-top: 3.500px; }
  .pencil { width: 8.5px; height: 9px; stroke-width: 3; stroke: #17181c; }
  .loc { width: 10px; height: 11.500px; stroke-width: 2.2; }

  .addhead { display: flex; align-items: center; height: 17px; padding-left: 7.500px; font-size: 8.2px; gap: 4.500px; white-space: nowrap; flex: none; margin-top: .8px; }
  .addhead b { font-weight: 600; }
  .flabel { font-size: 7.6px; line-height: 11px; margin: 5.500px 0 0 12.500px; flex: none; }
  .input { flex: none; box-sizing: border-box; margin: 2.500px 0 0 8px; width: 178px; height: 16.500px; border-radius: 6px; background: #fff; box-shadow: 0 1.500px 1.5px #0000003a; padding-left: 8px; font-size: 6.8px; line-height: 18px; color: #6f7278; }
  .input + .flabel { margin-top: 7.500px; }
  .input + .flabel.tight { margin-top: 5px; }
  .tight + .input { padding-left: 6px; }
  .input + .flabel.il { margin-top: 10px; }
  .faces { display: flex; gap: 6px; margin: 5px 0 0 11px; flex: none; }
  .faces .ico { width: 13.700px; height: 14px; stroke-width: 1.8; }
  .btns { display: flex; gap: 6px; margin: 12.500px 0 0 12.500px; }
  .ghost { background: #f1f1f1; color: #555; }

  .streets { width: 195.500px; height: 366px; }
  .pop { box-sizing: border-box; height: 51px; border-radius: 8px; background: #fff; display: flex; padding: 10px 8px 0 9.500px; }
  .disc { flex: none; width: 28px; height: 28px; border-radius: 50%; display: grid; place-items: center; }
  .disc .ico { width: 15px; height: 15px; stroke-width: 1.4; stroke: #2b2a3c; }
  .pop .info { margin-left: 8px; width: 112.500px; }
  .f7 .pop .info { width: 110.500px; }
  .pop strong { font-weight: 500; font-size: 7.600px; line-height: 10.500px; }
  .pop .lines { margin: 6px 0 0 -2.500px; gap: 9.500px; }
  .pop small { font-size: 6.500px; line-height: 10px; margin-top: 5.800px; color: #6f7278; }
  .x { width: 8px; height: 8px; margin-top: 2px; stroke-width: 3.600; stroke-linecap: butt; }
  .drop { box-sizing: border-box; height: 40px; background: #fff; border-radius: 2px; box-shadow: 0 1.500px 1.5px #00000045; padding: 8px 0 0 9.500px; font-size: 7.650px; line-height: 10.500px; }
  ul { list-style: none; margin: 13.200px 0 0 7px; }
  li { display: flex; align-items: center; gap: 2px; font-size: 7.600px; color: #252c55; font-weight: 500; white-space: nowrap; }
  li .ico { width: 10px; height: 10px; }
</style>
